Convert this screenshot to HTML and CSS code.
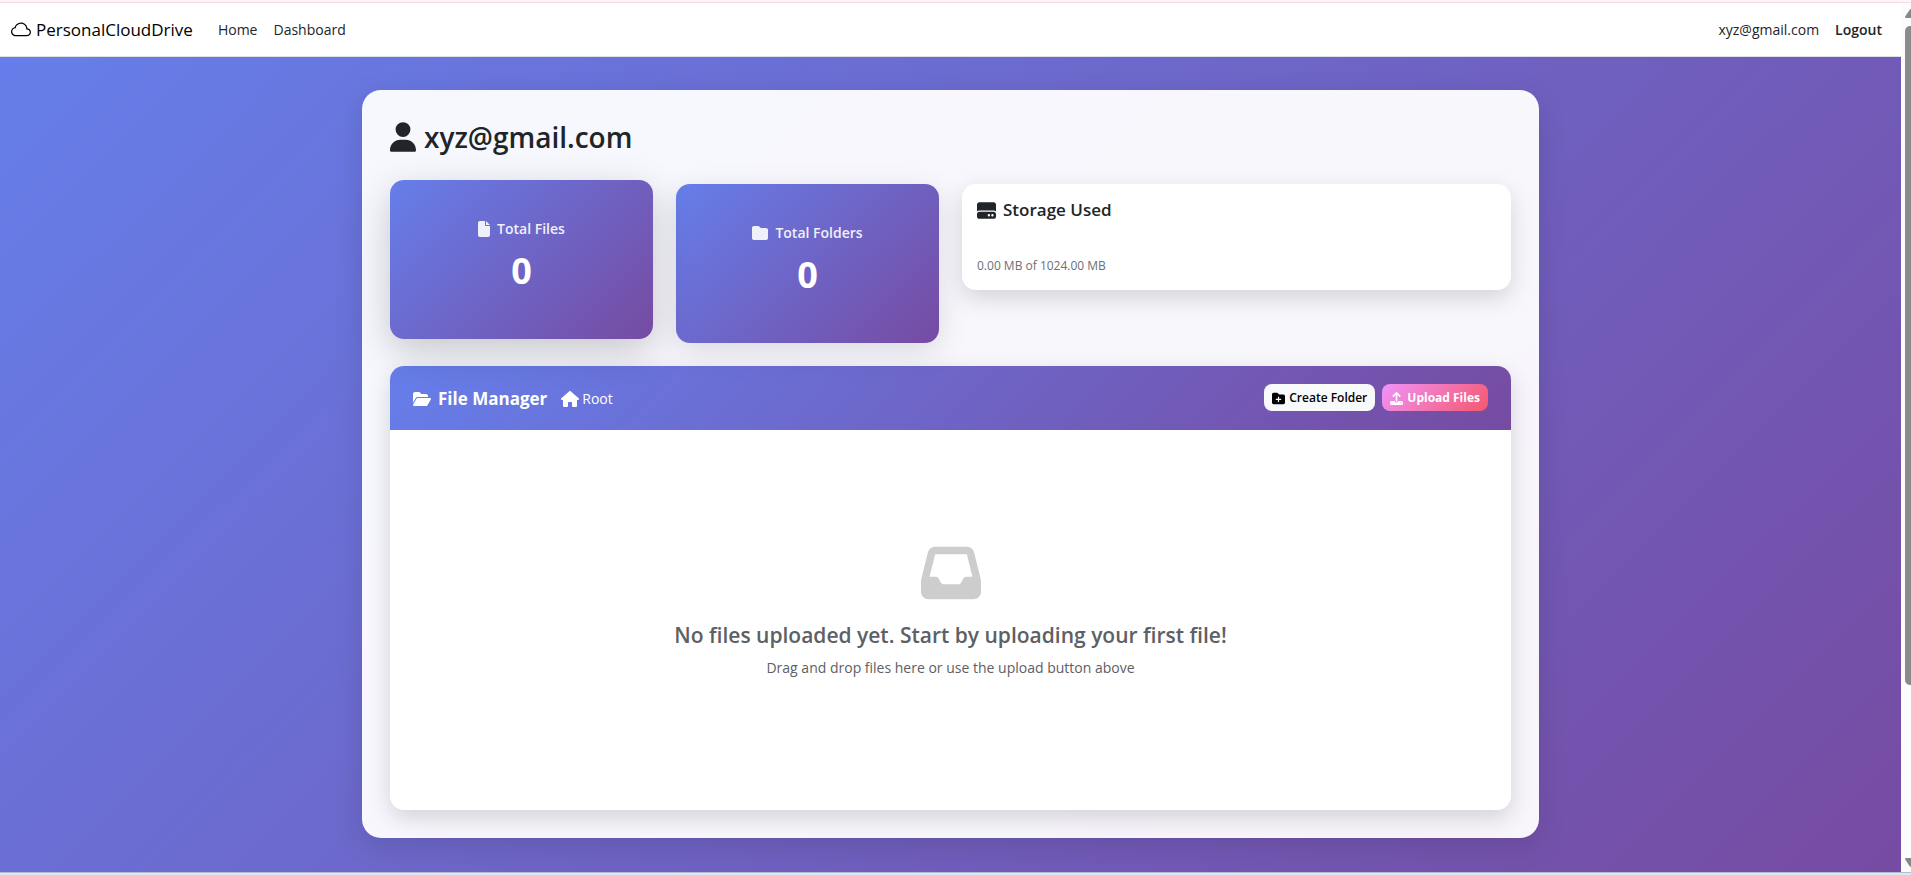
FILE: index.html
```html
<!DOCTYPE html>
<html lang="en">
<head>
<meta charset="utf-8">
<title>Dashboard - PersonalCloudDrive</title>
<link rel="stylesheet" href="styles.css">
</head>
<body>
<div class="viewport">
  <div class="page">
    <header class="navbar">
      <a class="brand" href="#">
        <svg class="brand-icon" viewBox="0 0 16 16" aria-hidden="true"><path d="M4.406 3.342A5.53 5.53 0 0 1 8 2c2.69 0 4.923 2 5.166 4.579C14.758 6.804 16 8.137 16 9.773 16 11.569 14.502 13 12.687 13H3.781C1.708 13 0 11.366 0 9.318c0-1.763 1.266-3.223 2.942-3.593.143-.863.698-1.723 1.464-2.383zm.653.757c-.757.653-1.153 1.44-1.153 2.056v.448l-.445.049C2.064 6.805 1 7.952 1 9.318 1 10.785 2.23 12 3.781 12h8.906C13.98 12 15 10.988 15 9.773c0-1.216-1.02-2.228-2.313-2.228h-.5v-.5C12.188 4.825 10.328 3 8 3a4.53 4.53 0 0 0-2.941 1.1z"/></svg>
        <span>PersonalCloudDrive</span>
      </a>
      <nav class="nav-links">
        <a href="#">Home</a>
        <a href="#">Dashboard</a>
      </nav>
      <div class="nav-user">
        <a href="#">xyz@gmail.com</a>
        <button class="logout" type="button">Logout</button>
      </div>
    </header>
    <main class="content">
      <section class="panel">
        <h1 class="user-title">
          <svg class="user-icon" viewBox="0 0 448 512" aria-hidden="true"><path d="M224 256A128 128 0 1 0 224 0a128 128 0 1 0 0 256zm-45.7 48C79.8 304 0 383.8 0 482.3C0 498.7 13.3 512 29.7 512H418.3c16.4 0 29.7-13.3 29.7-29.7C448 383.8 368.2 304 269.7 304H178.3z"/></svg>
          <span>xyz@gmail.com</span>
        </h1>
        <div class="stats">
          <article class="stat stat-raised">
            <h2 class="stat-label">
              <svg class="icon-file" viewBox="0 0 384 512" aria-hidden="true"><path d="M0 64C0 28.7 28.7 0 64 0H224V128c0 17.7 14.3 32 32 32H384V448c0 35.3-28.7 64-64 64H64c-35.3 0-64-28.7-64-64V64zm384 64H256V0L384 128z"/></svg>
              <span>Total Files</span>
            </h2>
            <p class="stat-value">0</p>
          </article>
          <article class="stat">
            <h2 class="stat-label">
              <svg class="icon-small" viewBox="0 0 512 512" aria-hidden="true"><path d="M64 480H448c35.3 0 64-28.7 64-64V160c0-35.3-28.7-64-64-64H288c-10.1 0-19.6-4.7-25.6-12.8L243.2 57.6C231.1 41.5 212.1 32 192 32H64C28.7 32 0 60.7 0 96V416c0 35.3 28.7 64 64 64z"/></svg>
              <span>Total Folders</span>
            </h2>
            <p class="stat-value">0</p>
          </article>
          <article class="storage">
            <h2 class="storage-title">
              <svg class="icon-storage" viewBox="0 0 512 512" aria-hidden="true"><path d="M0 96C0 60.7 28.7 32 64 32H448c35.3 0 64 28.7 64 64V280.4c-17-15.2-39.4-24.4-64-24.4H64c-24.6 0-47 9.2-64 24.4V96zM64 288H448c35.3 0 64 28.7 64 64v64c0 35.3-28.7 64-64 64H64c-35.3 0-64-28.7-64-64V352c0-35.3 28.7-64 64-64zM320 416a32 32 0 1 0 0-64 32 32 0 1 0 0 64zm128-32a32 32 0 1 0 -64 0 32 32 0 1 0 64 0z"/></svg>
              <span>Storage Used</span>
            </h2>
            <p class="storage-text">0.00 MB of 1024.00 MB</p>
          </article>
        </div>
        <section class="manager">
          <header class="manager-head">
            <h2 class="manager-title">
              <svg class="icon-open" viewBox="0 0 576 512" aria-hidden="true"><path d="M88.7 223.8L0 375.8V96C0 60.7 28.7 32 64 32H181.5c17 0 33.3 6.7 45.3 18.7l26.5 26.5c12 12 28.3 18.7 45.3 18.7H416c35.3 0 64 28.7 64 64v32H144c-22.8 0-43.8 12.1-55.3 31.8zm27.6 16.1C122.1 230 132.6 224 144 224H544c11.5 0 22 6.1 27.7 16.1s5.7 22.2-.1 32.1l-112 192C453.9 474 443.4 480 432 480H32c-11.5 0-22-6.1-27.7-16.1s-5.7-22.2 .1-32.1l112-192z"/></svg>
              <span>File Manager</span>
            </h2>
            <a class="crumb" href="#">
              <svg class="icon-home" viewBox="0 0 576 512" aria-hidden="true"><path d="M575.8 255.5c0 18-15 32.1-32 32.1h-32l.7 160.2c0 2.7-.2 5.4-.5 8.1V472c0 22.1-17.9 40-40 40H456c-1.1 0-2.2 0-3.3-.1c-1.4 .1-2.8 .1-4.2 .1H416 392c-22.1 0-40-17.9-40-40V448 384c0-17.7-14.3-32-32-32H256c-17.7 0-32 14.3-32 32v64 24c0 22.1-17.9 40-40 40H160 128.1c-1.5 0-3-.1-4.5-.2c-1.2 .1-2.4 .2-3.6 .2H104c-22.1 0-40-17.9-40-40V360c0-.9 0-1.9 .1-2.8V287.6H32c-18 0-32-14-32-32.1c0-9 3-17 10-24L266.4 8c7-7 15-8 22-8s15 2 21 7L564.8 231.5c8 7 12 15 11 24z"/></svg>
              <span>Root</span>
            </a>
            <div class="actions">
              <button class="btn btn-light" type="button">
                <svg viewBox="0 0 512 512" aria-hidden="true"><path fill-rule="evenodd" d="M64 480H448c35.3 0 64-28.7 64-64V160c0-35.3-28.7-64-64-64H288c-10.1 0-19.6-4.7-25.6-12.8L243.2 57.6C231.1 41.5 212.1 32 192 32H64C28.7 32 0 60.7 0 96V416c0 35.3 28.7 64 64 64zM232 376V312H168c-13.3 0-24-10.7-24-24s10.7-24 24-24h64V200c0-13.3 10.7-24 24-24s24 10.7 24 24v64h64c13.3 0 24 10.7 24 24s-10.7 24-24 24H280v64c0 13.3-10.7 24-24 24s-24-10.7-24-24z"/></svg>
                <span>Create Folder</span>
              </button>
              <button class="btn btn-upload" type="button">
                <svg viewBox="0 0 512 512" aria-hidden="true"><path d="M288 109.3V352c0 17.7-14.3 32-32 32s-32-14.3-32-32V109.3l-73.4 73.4c-12.5 12.5-32.8 12.5-45.3 0s-12.5-32.8 0-45.3l128-128c12.5-12.5 32.8-12.5 45.3 0l128 128c12.5 12.5 12.5 32.8 0 45.3s-32.8 12.5-45.3 0L288 109.3zM64 352H192c0 35.3 28.7 64 64 64s64-28.7 64-64H448c35.3 0 64 28.7 64 64v32c0 35.3-28.7 64-64 64H64c-35.3 0-64-28.7-64-64V416c0-35.3 28.7-64 64-64zM432 456a24 24 0 1 0 0-48 24 24 0 1 0 0 48z"/></svg>
                <span>Upload Files</span>
              </button>
            </div>
          </header>
          <div class="empty">
            <svg class="empty-icon" viewBox="0 0 512 512" aria-hidden="true"><path d="M121 32C91.6 32 66 52 58.9 80.5L1.9 308.4C.6 313.5 0 318.7 0 323.9V416c0 35.3 28.7 64 64 64H448c35.3 0 64-28.7 64-64V323.9c0-5.2-.6-10.4-1.9-15.5l-57-227.9C446 52 420.4 32 391 32H121zm0 64H391l48 192H387.8c-12.1 0-23.2 6.8-28.6 17.7l-14.3 28.6c-5.4 10.8-16.5 17.7-28.6 17.7H195.8c-12.1 0-23.2-6.8-28.6-17.7l-14.3-28.6c-5.4-10.8-16.5-17.7-28.6-17.7H73L121 96z"/></svg>
            <h3 class="empty-title">No files uploaded yet. Start by uploading your first file!</h3>
            <p class="empty-text">Drag and drop files here or use the upload button above</p>
          </div>
        </section>
      </section>
    </main>
  </div>
  <div class="scrollbar" aria-hidden="true">
    <svg class="arrow" viewBox="0 0 12 9"><path d="M1 9Q-.5 9 .5 7L4.5 1Q6-1 7.5 1L11.5 7Q12.5 9 11 9z"/></svg>
    <div class="track"><div class="thumb"></div></div>
    <svg class="arrow" viewBox="0 0 12 9"><path d="M1 0Q-.5 0 .5 2L4.5 8Q6 10 7.5 8L11.5 2Q12.5 0 11 0z"/></svg>
  </div>
</div>
</body>
</html>
```
FILE: styles.css
```css
*,
*::before,
*::after {
  box-sizing: border-box;
}

body {
  margin: 0;
  min-height: 100vh;
  display: flex;
  flex-direction: column;
  background: #fff5f8;
  color: #212529;
  font-family: "Open Sans", "Noto Sans", sans-serif;
  font-size: 14px;
  line-height: 22px;
}

body::before {
  content: "";
  height: 3px;
  border-bottom: 1px solid #f0dce2;
}

body::after {
  content: "";
  height: 3px;
  border-top: 1px solid #b5bcd0;
  background: #dbe8f6;
}

h1, h2, h3, p {
  margin: 0;
}

a {
  color: inherit;
  text-decoration: none;
}

button {
  font: inherit;
  border: 0;
  cursor: pointer;
}

svg {
  display: block;
  flex: none;
  fill: currentColor;
}

.viewport {
  flex: 1;
  display: flex;
}

.page {
  flex: 1;
  display: flex;
  flex-direction: column;
}

.navbar {
  display: flex;
  align-items: center;
  height: 54px;
  padding: 0 19px 0 11px;
  background: #fff;
  border-bottom: 1px solid #dee2e6;
}

.brand {
  display: flex;
  align-items: center;
  gap: 5px;
  margin-right: 25px;
  color: #000;
  font-size: 17px;
}

.brand-icon {
  width: 20px;
  height: 20px;
}

.nav-links,
.nav-user {
  display: flex;
  align-items: center;
  gap: 16px;
}

.nav-user {
  margin-left: auto;
}

.logout {
  padding: 0;
  background: none;
  color: #212529;
  font-weight: 600;
}

.content {
  flex: 1;
  padding: 33px 23px;
  background: linear-gradient(135deg, #667eea 0%, #764ba2 100%);
}

.panel {
  max-width: 1177px;
  margin: 0 auto;
  padding: 28px;
  border-radius: 19px;
  background: rgba(255, 255, 255, 0.95);
  box-shadow: 0 8px 30px rgba(0, 0, 0, 0.12);
}

.user-title {
  display: flex;
  align-items: center;
  gap: 8px;
  margin-bottom: 28px;
  font-size: 28px;
  font-weight: 600;
  line-height: 38px;
}

.user-icon {
  width: 26px;
  height: 30px;
}

.stats {
  display: grid;
  grid-template-columns: repeat(4, 1fr);
  align-items: start;
  gap: 23px;
  margin-bottom: 23px;
}

.stat {
  padding: 38px 23px 44px;
  border-radius: 14px;
  background: linear-gradient(135deg, #667eea 0%, #764ba2 100%);
  box-shadow: 0 8px 30px rgba(0, 0, 0, 0.12);
  color: #fff;
  text-align: center;
}

.stat-raised {
  transform: translateY(-4px);
  box-shadow: 0 12px 38px rgba(0, 0, 0, 0.2);
}

.stat-label {
  display: flex;
  align-items: center;
  justify-content: center;
  gap: 7px;
  font-size: 14px;
  font-weight: 600;
  opacity: 0.9;
}

.icon-file {
  width: 12px;
  height: 16px;
}

.icon-small {
  width: 16px;
  height: 16px;
}

.stat-value {
  margin-top: 7px;
  font-size: 36px;
  font-weight: 700;
  line-height: 48px;
}

.storage {
  grid-column: span 2;
  padding: 15px 15px 13px;
  border-radius: 14px;
  background: #fff;
  box-shadow: 0 8px 23px rgba(0, 0, 0, 0.15);
}

.storage-title {
  display: flex;
  align-items: center;
  gap: 7px;
  margin-bottom: 34px;
  font-size: 17px;
  font-weight: 600;
}

.icon-storage {
  width: 19px;
  height: 19px;
}

.storage-text {
  color: #6c6f73;
  font-size: 12px;
}

.manager {
  border-radius: 14px;
  overflow: hidden;
  background: #fff;
  box-shadow: 0 8px 23px rgba(0, 0, 0, 0.15);
}

.manager-head {
  display: flex;
  align-items: center;
  padding: 18px 23px 19px;
  background: linear-gradient(135deg, #667eea 0%, #764ba2 100%);
  color: #fff;
}

.manager-title,
.crumb {
  display: flex;
  align-items: center;
  padding-top: 2px;
}

.manager-title {
  gap: 7px;
  margin-right: 14px;
  font-size: 17px;
  font-weight: 700;
}

.crumb {
  gap: 3px;
}

.icon-open,
.icon-home {
  width: 18px;
  height: 16px;
}

.actions {
  display: flex;
  gap: 7px;
  margin-left: auto;
}

.btn {
  display: flex;
  align-items: center;
  gap: 4px;
  padding: 4px 8px 3px;
  border-radius: 8px;
  font-size: 12px;
  font-weight: 600;
  line-height: 20px;
}

.btn svg {
  width: 13px;
  height: 13px;
}

.btn-light {
  background: #f8f9fa;
  color: #000;
}

.btn-upload {
  background: linear-gradient(135deg, #f093fb 0%, #f5576c 100%);
  color: #fff;
  font-weight: 700;
}

.empty {
  display: flex;
  flex-direction: column;
  align-items: center;
  padding: 113px 23px 131px;
  text-align: center;
}

.empty-icon {
  width: 60px;
  height: 60px;
  margin-bottom: 17px;
  color: #cdcdcd;
}

.empty-title {
  margin-bottom: 7px;
  color: #5d6064;
  font-size: 21px;
  font-weight: 600;
  line-height: 30px;
}

.empty-text {
  color: #5d6064;
}

.scrollbar {
  display: flex;
  flex-direction: column;
  flex: 0 0 10px;
  padding: 6px 0 5px 4px;
  overflow: hidden;
  background: #fcfcfc;
  color: #888;
}

.arrow {
  width: 12px;
  height: 9px;
}

.track {
  flex: 1;
  margin: 8px 0;
}

.thumb {
  width: 12px;
  height: 80%;
  border-radius: 5px;
  background: #8a8a8a;
}
```
